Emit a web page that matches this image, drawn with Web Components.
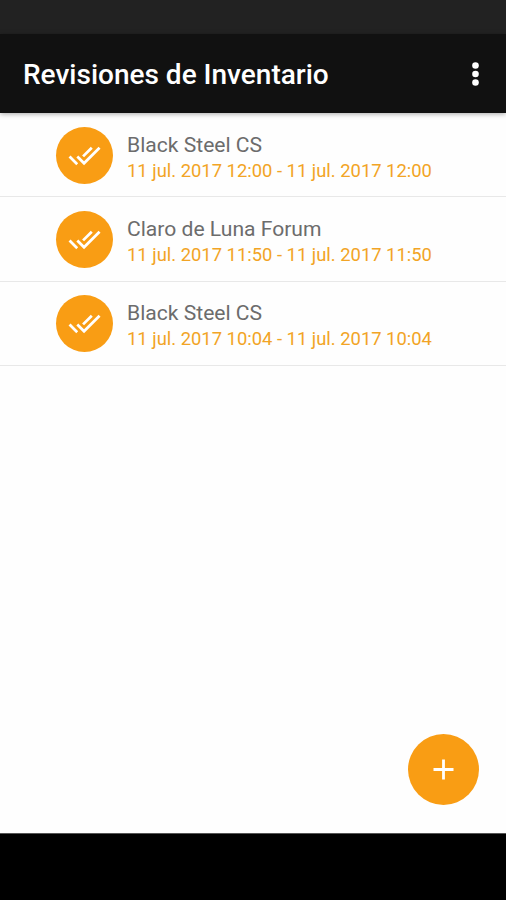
<!DOCTYPE html>
<html lang="es">
<head>
<meta charset="utf-8">
<title>Revisiones de Inventario</title>
<style>
    body {
        margin: 0;
        font-family: Roboto, sans-serif;
        background: #fefefe;
    }
</style>
</head>
<body>

<app-screen>
    <app-bar slot="bar" name="Revisiones de Inventario"></app-bar>
    <review-item name="Black Steel CS">11 jul. 2017 12:00 - 11 jul. 2017 12:00</review-item>
    <review-item name="Claro de Luna Forum">11 jul. 2017 11:50 - 11 jul. 2017 11:50</review-item>
    <review-item name="Black Steel CS">11 jul. 2017 10:04 - 11 jul. 2017 10:04</review-item>
    <add-button slot="action"></add-button>
</app-screen>

<script>
/* Screen: status bar, app bar, list, floating button, navigation bar */
const screenTemplate = document.createElement('template');

screenTemplate.innerHTML = `
    <style>
        :host {
            display: flex;
            flex-direction: column;
            height: 900px;
            overflow: hidden;
        }
        .status {
            flex: none;
            height: 34px;
            background: #222;
        }
        main {
            flex: 1;
            display: flex;
            flex-direction: column;
        }
        .action {
            display: flex;
            justify-content: flex-end;
            margin-top: auto;
            padding: 0 27px 28px 0;
        }
        .nav {
            flex: none;
            box-sizing: border-box;
            height: 67px;
            border-top: 1px solid #555;
            background: #000;
        }
    </style>
    <div class="status"></div>
    <slot name="bar"></slot>
    <main>
        <slot></slot>
        <div class="action"><slot name="action"></slot></div>
    </main>
    <div class="nav"></div>
`;

class AppScreen extends HTMLElement {
    constructor() {
        super();
        this.attachShadow({ mode: 'open' });
        this.shadowRoot.appendChild(screenTemplate.content.cloneNode(true));
    }
}

customElements.define('app-screen', AppScreen);


/* App bar with title and overflow menu */
const barTemplate = document.createElement('template');

barTemplate.innerHTML = `
    <style>
        :host {
            display: flex;
            flex: none;
            align-items: center;
            justify-content: space-between;
            box-sizing: border-box;
            height: 79px;
            padding: 0 26px 0 23px;
            background: #111;
            box-shadow: 0 1px 5px rgba(0, 0, 0, .35);
        }
        h1 {
            margin: 3px 0 0;
            font-size: 28px;
            font-weight: 500;
            line-height: 32px;
            white-space: nowrap;
            color: #fff;
        }
        svg {
            display: block;
            fill: #fff;
        }
    </style>
    <h1></h1>
    <svg width="9" height="26" viewBox="0 0 9 26">
        <circle cx="4.5" cy="4.5" r="3.3"/>
        <circle cx="4.5" cy="13" r="3.3"/>
        <circle cx="4.5" cy="21.5" r="3.3"/>
    </svg>
`;

class AppBar extends HTMLElement {
    constructor() {
        super();
        this.attachShadow({ mode: 'open' });
        this.shadowRoot.appendChild(barTemplate.content.cloneNode(true));
        this.shadowRoot.querySelector('h1').textContent = this.getAttribute('name');
    }
}

customElements.define('app-bar', AppBar);


/* One review, the dates come in through the slot */
const itemTemplate = document.createElement('template');

itemTemplate.innerHTML = `
    <style>
        :host {
            display: flex;
            flex: none;
            align-items: center;
            box-sizing: border-box;
            height: 84.4px;
            padding: 1px 0 0 56px;
            border-bottom: 1px solid #e8e8e8;
        }
        .icon {
            display: flex;
            align-items: center;
            justify-content: center;
            width: 57px;
            height: 57px;
            border-radius: 50%;
            background: #f99d14;
        }
        svg {
            fill: #fff;
        }
        .text {
            margin-left: 14px;
            padding-top: 4px;
            white-space: nowrap;
        }
        .name {
            font-size: 21.1px;
            line-height: 27px;
            color: #6c6c6c;
        }
        .dates {
            font-size: 18.4px;
            line-height: 26px;
            color: #f2a425;
        }
    </style>
    <div class="icon">
        <svg width="33" height="33" viewBox="0 0 24 24">
            <path d="M18 7l-1.41-1.41-6.34 6.34 1.41 1.41L18 7zm4.24-1.41L11.66 16.17 7.48 12l-1.41 1.41L11.66 19l12-12-1.42-1.41zM.41 13.41L6 19l1.41-1.41L1.83 12 .41 13.41z"/>
        </svg>
    </div>
    <div class="text">
        <div class="name"></div>
        <div class="dates"><slot></slot></div>
    </div>
`;

class ReviewItem extends HTMLElement {
    constructor() {
        super();
        this.attachShadow({ mode: 'open' });
        this.shadowRoot.appendChild(itemTemplate.content.cloneNode(true));
        this.shadowRoot.querySelector('.name').textContent = this.getAttribute('name');
    }
}

customElements.define('review-item', ReviewItem);


/* Round add button */
const addTemplate = document.createElement('template');

addTemplate.innerHTML = `
    <style>
        :host {
            display: flex;
            align-items: center;
            justify-content: center;
            width: 71px;
            height: 71px;
            border-radius: 50%;
            background: #f99d14;
        }
    </style>
    <svg width="21" height="21" viewBox="0 0 21 21">
        <path d="M10.5 .5v20M.5 10.5h20" stroke="#fff" stroke-width="2.8"/>
    </svg>
`;

class AddButton extends HTMLElement {
    constructor() {
        super();
        this.attachShadow({ mode: 'open' });
        this.shadowRoot.appendChild(addTemplate.content.cloneNode(true));
    }
}

customElements.define('add-button', AddButton);
</script>
</body>
</html>
